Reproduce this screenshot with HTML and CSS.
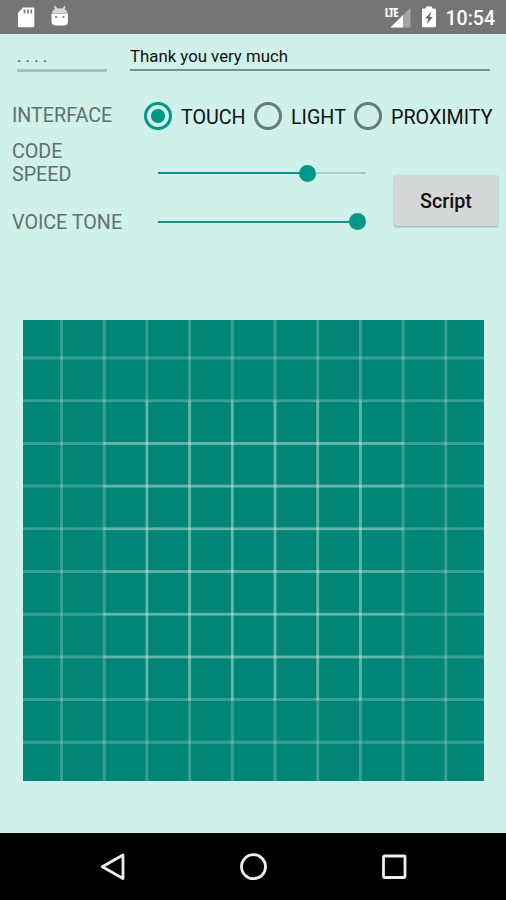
FILE: index.html
```html
<!DOCTYPE html>
<html lang="en">
<head>
    <meta charset="UTF-8">
    <meta name="viewport" content="width=device-width, initial-scale=1.0">
    <title>Morse Code</title>
    <link rel="stylesheet" href="styles.css">
</head>
<body>
    <div class="status-bar">
        <svg class="notifications" width="50" height="34" viewBox="0 0 50 34">
            <path fill="#fff" d="M23 7.500h10q1.300 0 1.300 1.300v17q0 1.500-1.500 1.500H19.500q-1.500 0-1.500-1.500V13z"/>
            <path stroke="#777" stroke-width="1.600" d="M24.500 9.500v4M28 9.500v4M31.300 9.500v4"/>
        </svg>
        <svg class="debug" width="20" height="34" viewBox="0 0 20 34">
            <path fill="#fff" d="M1.500 13.500h16.500v7.500q0 4.500-4.500 4.500h-7.500Q1.500 25.500 1.500 21z"/>
            <path fill="#d8d8d8" d="M2 13q.5-3 3-4L3.800 6.500l1.200-.7L7.500 8.500q2.500-.7 5 0l2-2.700 1.200.7L14.500 9q2.500 1 3 4z"/>
            <circle cx="6" cy="17" r="1" fill="#666"/>
            <circle cx="13.500" cy="17" r="1" fill="#666"/>
        </svg>
        <div class="spacer"></div>
        <div class="lte">LTE</div>
        <svg class="signal" width="22" height="34" viewBox="0 0 22 34">
            <path fill="#a5a5a5" d="M21.500 7.500v20h-20z"/>
            <path fill="#fff" d="M14 15v12.500H1.500z"/>
        </svg>
        <svg class="battery" width="14" height="34" viewBox="0 0 14 34">
            <path fill="#fff" d="M4 6.500h6v2h2.500q1.500 0 1.500 1.500v15.800q0 1.500-1.500 1.500h-11Q0 27.300 0 25.800V10q0-1.500 1.500-1.500H4z"/>
            <path fill="#666" d="M9.500 11.500L3 18.500h3.200L4.800 24l6-7H7.600z"/>
        </svg>
        <div class="clock">10:54</div>
    </div>

    <div class="app">
        <div class="fields">
            <div class="field code">. . . .</div>
            <div class="field message">Thank you very much</div>
        </div>

        <div class="interface">
            <div class="label">INTERFACE</div>
            <div class="option touch"><span class="radio checked"></span><span class="name">TOUCH</span></div>
            <div class="option light"><span class="radio"></span><span class="name">LIGHT</span></div>
            <div class="option"><span class="radio"></span><span class="name">PROXIMITY</span></div>
        </div>

        <div class="settings">
            <div class="sliders">
                <div class="label speed">CODE<br>SPEED</div>
                <div class="slider speed-slider"><div class="fill" style="width: 149.500px"></div><div class="thumb"></div><div class="rest"></div></div>
                <div class="label tone">VOICE TONE</div>
                <div class="slider"><div class="fill" style="width: 200px"></div><div class="thumb"></div></div>
            </div>
            <button class="script" type="button">Script</button>
        </div>

        <!-- touch pad -->
        <svg class="pad" width="461" height="461" viewBox="0 0 461 461">
            <rect width="461" height="461" fill="#008577"/>
            <g stroke="#fff" stroke-opacity=".22" stroke-width="3">
                <path d="M38.500 0v461M81.200 0v461M123.900 0v461M166.600 0v461M209.300 0v461M252 0v461M294.700 0v461M337.400 0v461M380.100 0v461M422.800 0v461"/>
                <path d="M0 38h461M0 80.700h461M0 123.400h461M0 166.100h461M0 208.800h461M0 251.500h461M0 294.200h461M0 336.900h461M0 379.600h461M0 422.300h461"/>
            </g>
            <g stroke="#fff" stroke-opacity=".22" stroke-width="2.600">
                <path d="M123.900 81v299M166.600 81v299M209.300 81v299M252 81v299M294.700 81v299M337.400 81v299"/>
                <path d="M81 123.400h299M81 166.100h299M81 208.800h299M81 251.500h299M81 294.200h299M81 336.900h299"/>
            </g>
        </svg>
    </div>

    <div class="nav-bar">
        <svg width="28" height="28" viewBox="0 0 28 28"><path d="M25 2v23.500L4.300 13.800z"/></svg>
        <svg width="28" height="28" viewBox="0 0 28 28"><circle cx="14.500" cy="13.700" r="12"/></svg>
        <svg width="28" height="28" viewBox="0 0 28 28"><rect x="3.500" y="3" width="21.500" height="21.500" rx="1"/></svg>
    </div>
</body>
</html>
```
FILE: styles.css
```css
* {
    box-sizing: border-box;
}
body {
    margin: 0;
    height: 900px;
    display: flex;
    flex-direction: column;
    background-color: #d0f0ea;
    color: #111;
    font-family: Roboto, sans-serif;
    font-size: 19.7px;
    overflow: hidden;
}
.status-bar {
    height: 34px;
    background-color: #757575;
    color: #fff;
    display: flex;
    align-items: center;
    padding-right: 11px;
}
.notifications {
    flex: none;
}
.spacer {
    flex: 1;
}
.lte {
    font-family: "Open Sans", sans-serif;
    font-size: 12.5px;
    line-height: 12px;
    font-weight: 700;
    font-stretch: 75%;
    letter-spacing: -1px;
    margin-right: -9px;
    padding-bottom: 9px;
}
.signal {
    margin-right: 11px;
}
.battery {
    margin-right: 10px;
}
.clock {
    font-size: 19.5px;
    font-weight: 500;
    line-height: 34px;
    padding-top: 4px;
}
.app {
    height: 799px;
    display: flex;
    flex-direction: column;
}
.fields {
    display: flex;
    gap: 23px;
    padding-left: 17px;
}
.field {
    height: 38px;
    padding-top: 11px;
    line-height: 22px;
    font-size: 16.8px;
}
.code {
    width: 90px;
    border-bottom: 3px solid #a2c5bd;
    color: #444;
}
.message {
    width: 360px;
    height: 37px;
    border-bottom: 2px solid #71918a;
}
.interface {
    height: 44px;
    margin-top: 22px;
    padding-left: 12px;
    display: flex;
    align-items: center;
}
.label {
    color: #5f706d;
    line-height: 23px;
}
.interface .label {
    width: 132px;
    padding-bottom: 2px;
}
.option {
    display: flex;
    align-items: center;
    gap: 9px;
    line-height: 24px;
}
.name {
    padding-top: 3px;
}
.touch {
    width: 110px;
}
.light {
    width: 100px;
}
.radio {
    width: 28px;
    height: 28px;
    flex: none;
    border: 3px solid #647a75;
    border-radius: 50%;
}
.checked {
    border-color: #009688;
    background: radial-gradient(circle, #009688 6.500px, transparent 7.500px);
}
.settings {
    display: flex;
    padding-left: 12px;
}
.sliders {
    width: 382px;
    display: grid;
    grid-template-columns: 146px 208px;
    grid-template-rows: 48px 71px;
    align-items: center;
}
.speed {
    padding-top: 1px;
}
.tone {
    padding-top: 2px;
}
.slider {
    height: 18px;
    display: flex;
    align-items: center;
}
.speed-slider {
    align-self: end;
    margin-bottom: 4px;
}
.fill {
    height: 2px;
    margin-right: -9px;
    background-color: #178f82;
}
.thumb {
    width: 17px;
    height: 17px;
    border-radius: 50%;
    background-color: #009688;
}
.rest {
    flex: 1;
    height: 2px;
    background-color: #a9cdc5;
}
.script {
    width: 104px;
    height: 51px;
    margin-top: 37px;
    padding: 2px 0 0;
    border: 0;
    border-radius: 2px;
    background-color: #d6d7d7;
    box-shadow: 0 1px 2px rgba(0, 0, 0, 0.3);
    color: #111;
    font-family: Roboto, sans-serif;
    font-size: 19.7px;
    font-weight: 500;
}
.pad {
    margin: 63px 0 0 23px;
}
.nav-bar {
    flex: 1;
    background-color: #000;
    display: flex;
    justify-content: center;
    align-items: center;
    gap: 113px;
}
.nav-bar svg {
    fill: none;
    stroke: #eee;
    stroke-width: 2.800;
    stroke-linejoin: round;
}
```
